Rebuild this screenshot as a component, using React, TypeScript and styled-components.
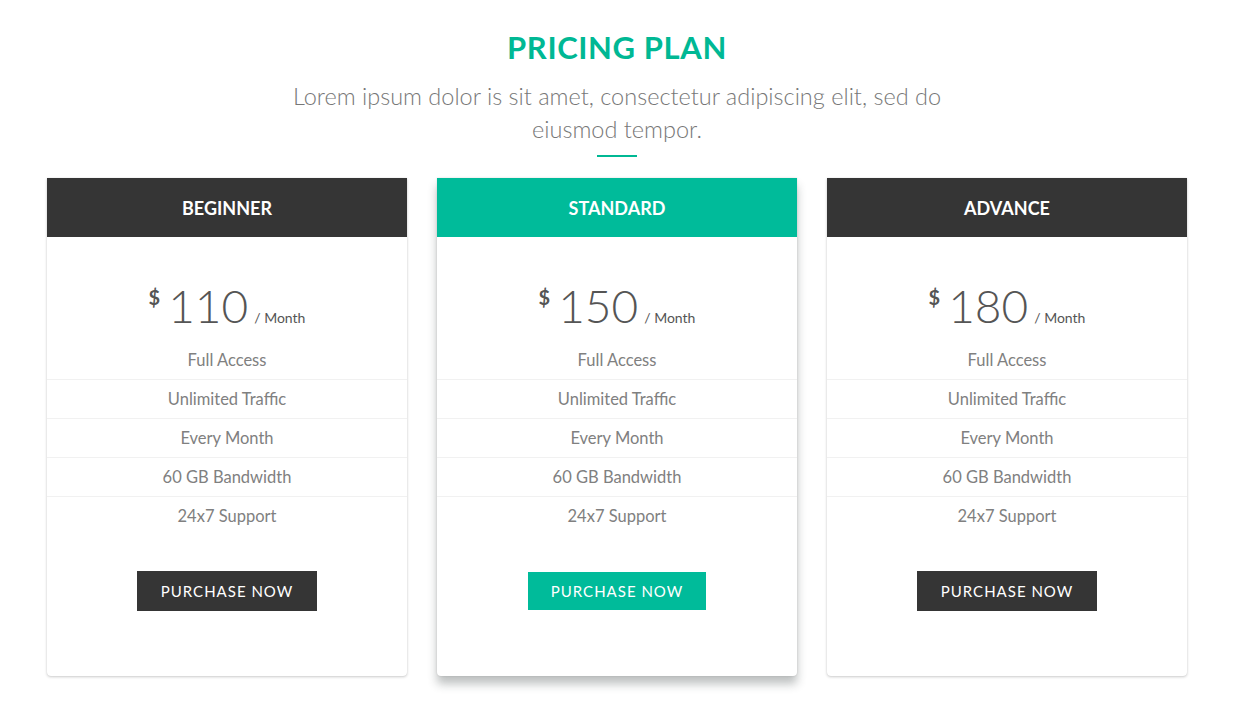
import React from "react";
import styled, { createGlobalStyle } from "styled-components";

const GlobalStyle = createGlobalStyle`
  *, *::before, *::after {
    box-sizing: border-box;
  }
  body {
    margin: 0;
    background: #fff;
    font-family: "Lato", "Open Sans", sans-serif;
  }
`;

const plans = [
  { name: "BEGINNER", price: "110", featured: false },
  { name: "STANDARD", price: "150", featured: true },
  { name: "ADVANCE", price: "180", featured: false },
];

const features = [
  "Full Access",
  "Unlimited Traffic",
  "Every Month",
  "60 GB Bandwidth",
  "24x7 Support",
];

const App = () => {
  return (
    <>
      <GlobalStyle />
      <Section>
        <Heading>
          <h2>PRICING PLAN</h2>
          <p>
            Lorem ipsum dolor is sit amet, consectetur adipiscing elit, sed do
            <br />
            eiusmod tempor.
          </p>
          <Divider />
        </Heading>
        <Grid>
          {plans.map((plan) => (
            <Card key={plan.name} featured={plan.featured}>
              <CardHead featured={plan.featured}>{plan.name}</CardHead>
              <Price>
                <sup>$</sup>
                <strong>{plan.price}</strong>
                <span>/ Month</span>
              </Price>
              <Features>
                {features.map((f) => (
                  <li key={f}>{f}</li>
                ))}
              </Features>
              <Button featured={plan.featured}>Purchase Now</Button>
            </Card>
          ))}
        </Grid>
      </Section>
    </>
  );
};

export default App;

const Section = styled.div`
  width: 1140px;
  margin-left: 47px;
  padding: 29px 0 40px;
`;

const Heading = styled.div`
  text-align: center;

  h2 {
    margin: 0;
    font-size: 31px;
    line-height: 36px;
    font-weight: 700;
    color: #00b894;
    letter-spacing: 0.6px;
  }

  p {
    margin: 15px 0 0;
    font-size: 23.5px;
    line-height: 33px;
    font-weight: 300;
    color: #777;
  }
`;

const Divider = styled.div`
  width: 40px;
  height: 2px;
  background: #00b894;
  margin: 9px auto 0;
`;

const Grid = styled.div`
  display: grid;
  grid-template-columns: repeat(3, 360px);
  gap: 30px;
  margin-top: 21px;
`;

const Card = styled.div<{ featured: boolean }>`
  background: #fff;
  border-radius: 0 0 4px 4px;
  padding-bottom: 65px;
  text-align: center;
  box-shadow: ${(p) =>
    p.featured
      ? "0 8px 10px rgba(40, 50, 50, 0.3), 0 0 2px rgba(0, 0, 0, 0.15)"
      : "0 1px 3px rgba(0, 0, 0, 0.2), 0 0 1px rgba(0, 0, 0, 0.12)"};
`;

const CardHead = styled.div<{ featured: boolean }>`
  height: 59px;
  display: flex;
  align-items: center;
  justify-content: center;
  background: ${(p) => (p.featured ? "#00bb9a" : "#353535")};
  color: #fff;
  font-size: 18px;
  font-weight: 700;
`;

const Price = styled.div`
  height: 104px;
  padding-top: 44px;
  display: flex;
  justify-content: center;
  align-items: baseline;
  color: #555;
  line-height: 50px;

  sup {
    font-size: 20px;
    font-weight: 700;
    line-height: 1;
    align-self: flex-start;
    margin-top: 6px;
    margin-right: 8px;
  }

  strong {
    font-size: 46px;
    font-weight: 300;
  }

  span {
    font-size: 14px;
    margin-left: 6px;
    color: #555;
  }
`;

const Features = styled.ul`
  list-style: none;
  margin: 0;
  padding: 0;

  li {
    height: 39px;
    line-height: 38px;
    font-size: 16.5px;
    font-weight: 400;
    color: #808080;
    border-bottom: 1px solid #f1f1f1;
  }

  li:last-child {
    border-bottom: 0;
  }
`;

const Button = styled.button<{ featured: boolean }>`
  display: block;
  margin: ${(p) => (p.featured ? "36px" : "35px")} auto 0;
  width: ${(p) => (p.featured ? "178px" : "180px")};
  height: ${(p) => (p.featured ? "38px" : "40px")};
  border: 0;
  border-radius: 0;
  background: ${(p) => (p.featured ? "#00bb9a" : "#353535")};
  color: #fff;
  font-family: "Lato", sans-serif;
  font-size: 15px;
  letter-spacing: 1px;
  text-transform: uppercase;
  cursor: pointer;
`;
